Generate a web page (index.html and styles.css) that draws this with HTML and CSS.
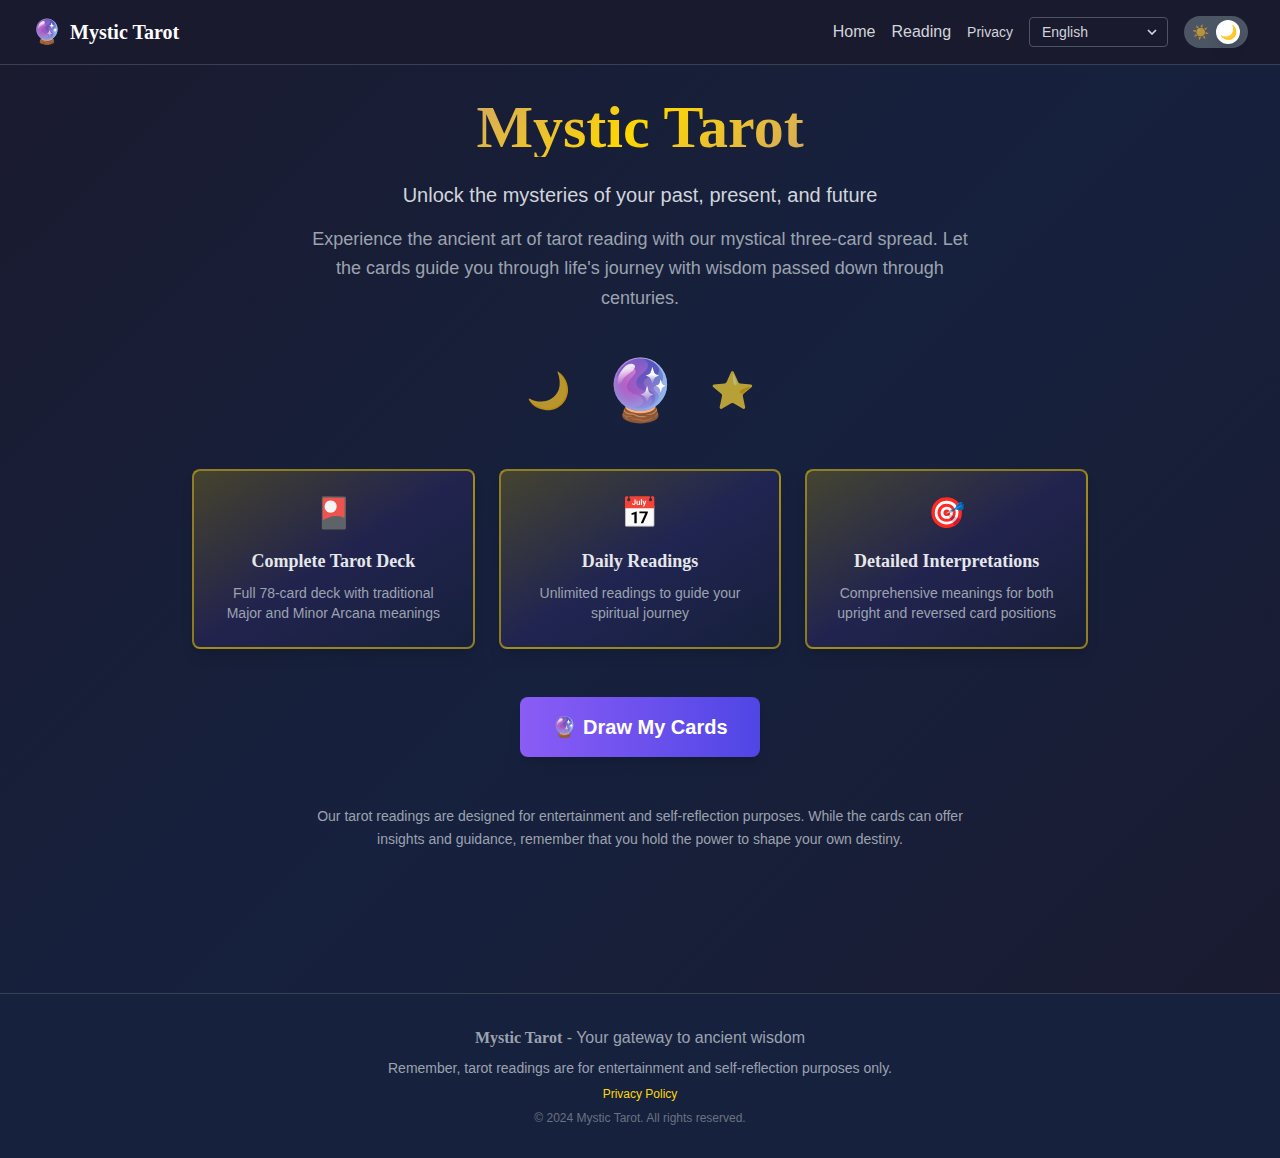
FILE: index.html
```html
<!DOCTYPE html>
<html lang="en">
<head>
<meta charset="utf-8">
<title>Mystic Tarot</title>
<link rel="stylesheet" href="styles.css">
</head>
<body>
<header class="header">
  <a class="brand"><span class="brand-icon">🔮</span><span class="brand-name">Mystic Tarot</span></a>
  <nav class="nav">
    <a class="nav-link">Home</a>
    <a class="nav-link">Reading</a>
    <a class="nav-link nav-link-small">Privacy</a>
    <div class="language">
      <span>English</span>
      <svg class="chevron" viewBox="0 0 10 6" fill="none" stroke="currentColor" stroke-width="1.7"><path d="M1 1l4 4 4-4"/></svg>
    </div>
    <button class="toggle" aria-label="Toggle theme">
      <span class="toggle-sun">☀️</span>
      <span class="toggle-knob">🌙</span>
    </button>
  </nav>
</header>
<main class="main">
  <h1 class="title">Mystic Tarot</h1>
  <p class="subtitle">Unlock the mysteries of your past, present, and future</p>
  <p class="intro">Experience the ancient art of tarot reading with our mystical three-card spread. Let the cards guide you through life's journey with wisdom passed down through centuries.</p>
  <div class="symbols">
    <span class="symbol">🌙</span>
    <span class="symbol symbol-large">🔮</span>
    <span class="symbol">⭐</span>
  </div>
  <section class="cards">
    <article class="card">
      <div class="card-icon">🎴</div>
      <h3 class="card-title">Complete Tarot Deck</h3>
      <p class="card-text">Full 78-card deck with traditional Major and Minor Arcana meanings</p>
    </article>
    <article class="card">
      <div class="card-icon">📅</div>
      <h3 class="card-title">Daily Readings</h3>
      <p class="card-text">Unlimited readings to guide your spiritual journey</p>
    </article>
    <article class="card">
      <div class="card-icon">🎯</div>
      <h3 class="card-title">Detailed Interpretations</h3>
      <p class="card-text">Comprehensive meanings for both upright and reversed card positions</p>
    </article>
  </section>
  <button class="draw">🔮 Draw My Cards</button>
  <p class="notice">Our tarot readings are designed for entertainment and self-reflection purposes. While the cards can offer insights and guidance, remember that you hold the power to shape your own destiny.</p>
</main>
<footer class="footer">
  <p class="footer-brand"><span class="footer-name">Mystic Tarot</span> - Your gateway to ancient wisdom</p>
  <p class="footer-note">Remember, tarot readings are for entertainment and self-reflection purposes only.</p>
  <a class="footer-link">Privacy Policy</a>
  <p class="footer-copy">© 2024 Mystic Tarot. All rights reserved.</p>
</footer>
</body>
</html>
```
FILE: styles.css
```css
*, *::before, *::after { box-sizing: border-box; margin: 0; padding: 0; }

body {
  min-height: 1158px;
  display: flex;
  flex-direction: column;
  background: linear-gradient(135deg, #1a1a2e 0%, #16213e 50%, #1a1a2e 100%);
  color: #d1d5db;
  font-family: "Liberation Sans", Arial, sans-serif;
  font-size: 16px;
  line-height: 24px;
}

button { border: 0; font: inherit; }

.header {
  height: 65px;
  padding: 0 32px;
  display: flex;
  align-items: center;
  justify-content: space-between;
  background: #1a1a2e;
  border-bottom: 1px solid #374151;
}
.brand { display: flex; align-items: center; gap: 8px; }
.brand-icon { font-size: 24px; line-height: 32px; }
.brand-name {
  color: #fff;
  font: bold 20px/28px "Liberation Serif", serif;
}
.nav { display: flex; align-items: center; gap: 16px; }
.nav-link-small { font-size: 14px; line-height: 20px; }
.language {
  width: 139px;
  height: 30px;
  padding: 0 10px 0 12px;
  display: flex;
  align-items: center;
  justify-content: space-between;
  border: 1px solid #4b5563;
  border-radius: 4px;
  font-size: 14px;
}
.chevron { width: 10px; height: 6px; }
.toggle {
  width: 64px;
  height: 32px;
  padding: 0 8px;
  display: flex;
  align-items: center;
  justify-content: space-between;
  border-radius: 16px;
  background: #4b5563;
}
.toggle-sun { font-size: 14px; line-height: 20px; opacity: .6; }
.toggle-knob {
  width: 24px;
  height: 24px;
  display: flex;
  align-items: center;
  justify-content: center;
  border-radius: 50%;
  background: #fff;
  box-shadow: 0 10px 15px -3px rgba(0, 0, 0, .1), 0 4px 6px -4px rgba(0, 0, 0, .1);
  font-size: 14px;
}

.main {
  flex: 1;
  padding: 32px;
  display: flex;
  flex-direction: column;
  align-items: center;
  text-align: center;
}
.title {
  margin-bottom: 24px;
  font: bold 60px/60px "Liberation Serif", serif;
  color: transparent;
  background: linear-gradient(135deg, #d4a960 0%, #ffd700 50%, #d4a960 100%);
  background-clip: text;
  -webkit-background-clip: text;
}
.subtitle { margin-bottom: 16px; font-size: 20px; line-height: 28px; }
.intro {
  max-width: 672px;
  margin-bottom: 48px;
  color: #9ca3af;
  font-size: 18px;
  line-height: 29.25px;
}
.symbols {
  margin-bottom: 48px;
  display: flex;
  align-items: center;
  gap: 32px;
}
.symbol {
  font-size: 36px;
  line-height: 40px;
  opacity: .7;
  will-change: transform;
  transform: translateX(-.4px);
}
.symbol-large {
  font-size: 60px;
  line-height: 60px;
  opacity: 1;
  transform: translate(-.4px, .4px);
}

.cards {
  width: 896px;
  margin-bottom: 48px;
  display: grid;
  grid-template-columns: repeat(3, 1fr);
  gap: 24px;
}
.card {
  padding: 24px;
  border: 2px solid rgba(255, 215, 0, .5);
  border-radius: 8px;
  background: linear-gradient(to bottom right, rgba(255, 215, 0, .2), rgba(77, 54, 160, .2) 50%, transparent);
  box-shadow: 0 10px 15px -3px rgba(0, 0, 0, .1), 0 4px 6px -4px rgba(0, 0, 0, .1);
}
.card-icon { margin-bottom: 16px; font-size: 30px; line-height: 36px; }
.card-title {
  margin-bottom: 8px;
  color: #e5e7eb;
  font: bold 18px/28px "Liberation Serif", serif;
}
.card-text { color: #9ca3af; font-size: 14px; line-height: 20px; }

.draw {
  margin-bottom: 48px;
  padding: 16px 32px;
  border-radius: 8px;
  color: #fff;
  background: linear-gradient(90deg, #8b5cf6, #4f46e5);
  box-shadow: 0 10px 15px -3px rgba(0, 0, 0, .1), 0 4px 6px -4px rgba(0, 0, 0, .1);
  font-size: 20px;
  font-weight: bold;
  line-height: 28px;
}
.notice {
  max-width: 672px;
  color: #9ca3af;
  font-size: 14px;
  line-height: 22.75px;
}

.footer {
  padding: 32px;
  display: flex;
  flex-direction: column;
  align-items: center;
  gap: 8px;
  border-top: 1px solid #374151;
  background: #16213e;
  color: #9ca3af;
}
.footer-name { font-family: "Liberation Serif", serif; font-weight: bold; }
.footer-note { font-size: 14px; line-height: 20px; }
.footer-link { color: #ffd700; font-size: 12px; line-height: 16px; }
.footer-copy { color: #6b7280; font-size: 12px; line-height: 16px; }
```
